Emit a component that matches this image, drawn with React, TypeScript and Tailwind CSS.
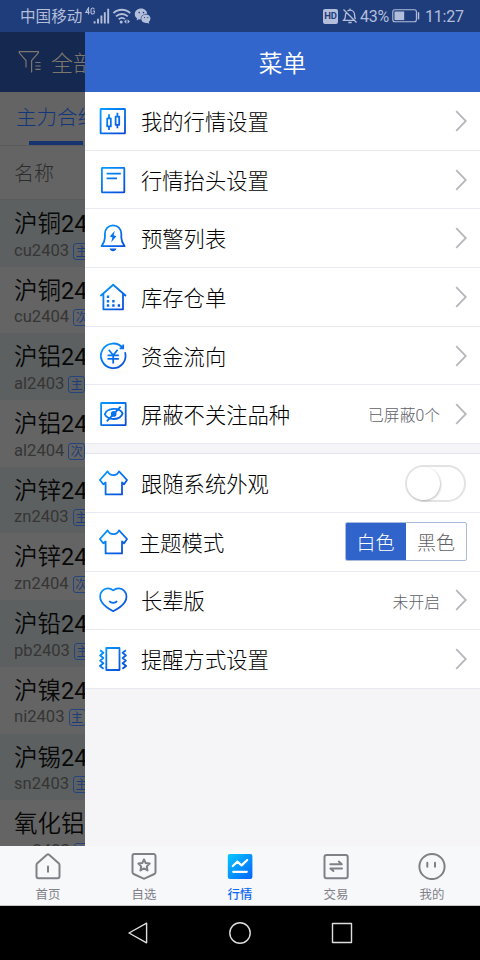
import React, { useState } from "react";

interface MenuItem {
  title: string;
  icon: React.ReactNode;
  extra?: "chevron" | "toggle" | "theme";
  note?: string;
}

interface Contract {
  metal: string;
  month: string;
  code: string;
  tag: string;
}

const contracts: Contract[] = [
  { metal: "沪铜", month: "2403", code: "cu2403", tag: "主" },
  { metal: "沪铜", month: "2404", code: "cu2404", tag: "次" },
  { metal: "沪铝", month: "2403", code: "al2403", tag: "主" },
  { metal: "沪铝", month: "2404", code: "al2404", tag: "次" },
  { metal: "沪锌", month: "2403", code: "zn2403", tag: "主" },
  { metal: "沪锌", month: "2404", code: "zn2404", tag: "次" },
  { metal: "沪铅", month: "2403", code: "pb2403", tag: "主" },
  { metal: "沪镍", month: "2403", code: "ni2403", tag: "主" },
  { metal: "沪锡", month: "2403", code: "sn2403", tag: "主" },
  { metal: "氧化铝", month: "2403", code: "ao2403", tag: "主" },
];

const MenuIcon: React.FC<{ children: React.ReactNode }> = ({ children }) => (
  <svg
    viewBox="0 0 30 30"
    className="w-[30px] h-[30px] shrink-0"
    fill="none"
    stroke="url(#menuBlue)"
    strokeWidth="1.8"
    strokeLinejoin="round"
  >
    {children}
  </svg>
);

const shirt = (
  <path d="M9.6 3.4 1.9 12 5.3 16.3 7.6 14.5V26.4H24V14.5L26.1 16.3 29 12 21 3.4C18.8 8.4 12 8.4 9.6 3.4Z" />
);

const quoteItems: MenuItem[] = [
  {
    title: "我的行情设置",
    extra: "chevron",
    icon: (
      <>
        <rect x="2.6" y="3" width="24.4" height="24.4" rx="0.5" />
        <path d="M9.2 12.4h3.6v8H9.2zM11 8.2v4.2M11 20.4v3.6M17.6 10.6h3.6v8.2h-3.6zM19.4 6.8v3.8M19.4 18.8v3.4" />
      </>
    ),
  },
  {
    title: "行情抬头设置",
    extra: "chevron",
    icon: (
      <>
        <rect x="3.9" y="2.8" width="22.4" height="24.6" rx="0.5" />
        <path d="M8.6 8.7h14.2M8.6 13.4H19" />
      </>
    ),
  },
  {
    title: "预警列表",
    extra: "chevron",
    icon: (
      <>
        <path d="M3.6 23.2C5.3 20.6 6.9 18.4 6.9 14.6V11C6.9 5.6 10.6 2.4 15.1 2.4S23.3 5.6 23.3 11v3.6c0 3.8 1.6 6 3.3 8.6Z" />
        <path d="M16.8 7.7 11.8 13.6l2.6 1-1.2 4.6 5.2-6-2.7-1Z" fill="url(#menuBlue)" stroke="none" />
        <path d="M11.5 25.6h7c-.6 1.7-2 2.7-3.5 2.7s-2.9-1-3.5-2.7Z" fill="url(#menuBlue)" stroke="none" />
      </>
    ),
  },
  {
    title: "库存仓单",
    extra: "chevron",
    icon: (
      <>
        <path d="M2.4 14 15.2 2.8 28 14M5.4 11.5V27.3H25V11.5" />
        <path d="M8.8 13.6h2.4V16H8.8zM8.8 18h2.4v2.4H8.8zM8.8 22.3h2.4v2.4H8.8zM14.2 18h2.4v2.4h-2.4zM14.2 22.3h2.4v2.4h-2.4zM19.7 22.3h2.4v2.4h-2.4z" fill="url(#menuBlue)" stroke="none" />
      </>
    ),
  },
  {
    title: "资金流向",
    extra: "chevron",
    icon: (
      <>
        <path d="M24.9 7.2A12.3 12.3 0 1 0 27 11.2M25.2 3.4V7.4H21.6" />
        <path d="m10.8 8.8 4.4 5.4 4.4-5.4M9.5 14.3h11.4M9.5 17.9h11.4M15.2 14.2v8.3" />
      </>
    ),
  },
  {
    title: "屏蔽不关注品种",
    extra: "chevron",
    note: "已屏蔽0个",
    icon: (
      <>
        <rect x="3.1" y="4" width="24.6" height="22.2" rx="0.5" />
        <path d="M6.8 15.4C9.2 8.2 21.6 8.2 24.6 14.4 22.2 21.8 10.2 21.6 6.8 15.4Z" />
        <path d="M22.6 7.6 8.8 22.4" />
        <circle cx="15.7" cy="14.9" r="1.9" fill="url(#menuBlue)" />
      </>
    ),
  },
];

const appearanceItems: MenuItem[] = [
  { title: "跟随系统外观", extra: "toggle", icon: shirt },
  { title: "主题模式", extra: "theme", icon: shirt },
  {
    title: "长辈版",
    extra: "chevron",
    note: "未开启",
    icon: (
      <>
        <path d="M15.2 5.4C11.8 2.6 7.3 2.9 4.5 5.7 1.5 8.8 1.4 13.8 3.9 17.3c2.6 3.8 6.3 6.5 11.3 8.9 5-2.4 8.9-5.1 11.5-8.9 2.5-3.5 2.4-8.5-.6-11.6-2.8-2.8-7.4-3.1-10.9-.3Z" />
        <path d="M11.2 16.2c1.9 2.2 6 2.2 7.9 0" />
      </>
    ),
  },
  {
    title: "提醒方式设置",
    extra: "chevron",
    icon: (
      <>
        <rect x="8.3" y="4" width="13.2" height="22" rx="0.3" />
        <path d="M2.1 6.2 5.4 8.8 2.1 11.5 5.4 14 2.1 16.6 5.4 19.2 1.9 22 5.6 24.7M27.9 6.2 24.6 8.8 27.9 11.5 24.6 14 27.9 16.6 24.6 19.2 28.1 22 24.4 24.7" />
      </>
    ),
  },
];

const StatusBar: React.FC = () => (
  <header className="flex h-8 shrink-0 items-center bg-[#1f3d7a] pl-[20px] pr-[16px] text-[#b3bedb]">
    <span className="pt-[3px] text-[15.6px] leading-[29px]">中国移动</span>
    <svg viewBox="0 0 68 18" className="ml-[3px] h-[18px] w-[68px]" fill="none" stroke="currentColor">
      <path d="M3.5 7.5V.8L.8 5.4h3.8M9.3 2.4C8.9.4 6.1.4 6 2.8v2.4c0 2.5 3.3 2.4 3.4 0V4H7.8" strokeWidth="1.1" />
      <path d="M9.6 14.2v2.2M13 11.8v4.6M16.4 8.5v7.9M19.8 5.2v11.2M23.2 1.7v14.7" strokeWidth="1.9" />
      <path d="M28.4 6.1c4.6-4.5 12.2-4.5 16.8 0M31 9.3c3.4-3.1 8.4-3.1 11.8 0M33.7 12.3c1.9-1.6 4.5-1.6 6.2-.1" strokeWidth="1.8" />
      <circle cx="36.2" cy="14.9" r="1.5" fill="currentColor" stroke="none" />
      <path d="m41.4 12.2-2.3 2.3 2.3 2.3zM42.6 12.2l2.3 2.3-2.3 2.3z" fill="currentColor" stroke="none" />
      <path d="M56.4 1.6c-4.2 0-6.6 2.7-6.6 5.6 0 1.8.8 3.2 2.3 4.2l-.5 2.1 2.2-1.3 2 .4c-.5-3.6 2.4-5.9 6.4-5.9-.4-2.8-2.8-5.1-5.8-5.1Z" fill="currentColor" stroke="none" />
      <path d="M61 7.6c-3.1 0-4.8 2.1-4.8 4.2 0 2.5 2.2 4.7 6.1 4.1l1.9.9-.5-1.7c3.2-2.3 1.9-7.5-2.7-7.5Z" fill="currentColor" stroke="none" />
      <g fill="#1f3d7a" stroke="none">
        <circle cx="54.2" cy="5.6" r=".8" />
        <circle cx="58.5" cy="5.6" r=".8" />
        <circle cx="59.5" cy="10.6" r=".6" />
        <circle cx="62.8" cy="10.6" r=".6" />
      </g>
    </svg>
    <div className="ml-auto flex items-center">
      <span className="flex h-[15px] w-[15px] items-center justify-center rounded-[2px] bg-[#b3bedb] font-[Roboto] text-[9.5px] font-bold leading-none tracking-[-0.2px] text-[#1f3d7a]">
        HD
      </span>
      <svg viewBox="0 0 16 16" className="ml-1 h-4 w-4" fill="none" stroke="currentColor" strokeWidth="1.3">
        <path d="m1.5 1.5 13 13M4.2 4.7c-.6 1-.8 2-.8 3.2 0 2-.5 3.2-1.7 4.4h10.6M5.5 3.1C6.3 2.5 7 2.2 8 2.2c2.8 0 4.6 2.2 4.6 5 0 1.9.2 3 .9 4M6.3 14.5h3.4M8 .6v1.6" />
      </svg>
      <span className="ml-[2px] w-[30px] pt-[2px] text-[16px] leading-[30px] tracking-[-0.3px]">43%</span>
      <svg viewBox="0 0 28 14" className="ml-[2px] h-[14px] w-7" fill="none" stroke="currentColor">
        <rect x=".8" y=".8" width="23.6" height="12" rx="2" strokeWidth="1.1" />
        <path d="M2.5 2.5h9.7v8.6H2.5z" fill="currentColor" stroke="none" />
        <path d="M26.5 3.2v7.2" strokeWidth="1.5" />
      </svg>
      <span className="ml-[5px] w-[39px] pt-[2px] text-[16px] leading-[30px] tracking-[-0.2px]">11:27</span>
    </div>
  </header>
);

const QuoteList: React.FC = () => (
  <aside className="w-[85px] shrink-0 overflow-hidden whitespace-nowrap bg-[#646464]">
    <div className="flex h-[60px] items-center bg-[#142850] text-[#7d776d]">
      <svg viewBox="0 0 24 24" className="ml-[18px] h-6 w-6 shrink-0" fill="none" stroke="currentColor" strokeWidth="1.2">
        <path d="M8 17.5v-7L1.2 2.8V1.7h19.2v1.1L13.6 10.5v12M17.3 12.5h5.3M17.3 16h5.3M17.3 19.4h5.3" />
      </svg>
      <span className="ml-[9px] pt-[3px] text-[22px] font-light">全部</span>
    </div>
    <div className="h-[54px] border-b border-[#5b5b5d] pl-[16px]">
      <p className="h-[49px] text-[20.5px] font-light leading-[53px] text-[#12367c]">主力合约</p>
      <div className="ml-[13px] h-1 w-[54px] bg-[#173471]" />
    </div>
    <div className="h-[54px] border-b border-[#5b5b5d] pl-[14px] text-[20px] font-light leading-[57px] text-[#2c2c2c]">
      名称
    </div>
    {contracts.map((item, i) => (
      <div key={item.code} className={`h-[66.7px] pl-[14px] pt-[9px] ${i % 2 === 0 ? "bg-[#5d6060]" : ""}`}>
        <p className="text-[23.5px] leading-[30px] text-[#080808]">
          <span className="font-[350]">{item.metal}</span>
          {item.month}
        </p>
        <div className="flex h-[24px] items-center text-[16.6px] text-[#353535]">
          {item.code}
          <span className="ml-[4px] flex h-[17px] w-[17px] shrink-0 items-center justify-center rounded-[3px] border border-[#23447f] pt-[1px] text-[12px] leading-none text-[#1c3c78]">
            {item.tag}
          </span>
        </div>
      </div>
    ))}
  </aside>
);

const MenuRow: React.FC<{ item: MenuItem }> = ({ item }) => {
  const [on, setOn] = useState(false);

  return (
    <div className="flex flex-1 items-center border-b-[1.5px] border-[#e7e8f0] bg-white pl-[13px] pr-[13px]">
      <MenuIcon>{item.icon}</MenuIcon>
      <span className={`pt-[4px] text-[21.3px] font-light leading-8 text-black ${item.extra === "theme" ? "ml-[11px]" : "ml-[13px]"}`}>
        {item.title}
      </span>
      <div className="ml-auto flex items-center">
        {item.note && <span className="mr-[15px] pt-[4px] text-[15.8px] font-light text-[#606068]">{item.note}</span>}
        {item.extra === "chevron" && (
          <svg viewBox="0 0 12 22" className="h-[22px] w-3" fill="none" stroke="#b6b6bc" strokeWidth="1.8">
            <path d="m1.2 1.2 9.6 9.8-9.6 9.8" />
          </svg>
        )}
        {item.extra === "toggle" && (
          <button
            onClick={() => setOn(!on)}
            className={`mr-[1px] mt-[1px] flex h-[37px] w-[61px] rounded-full border-2 border-[#e3e3e4] bg-white ${on ? "justify-end" : ""}`}
          >
            <span className="h-[33px] w-[33px] rounded-full bg-white shadow-[1px_1px_2px_rgba(0,0,0,0.22)]" />
          </button>
        )}
        {item.extra === "theme" && (
          <div className="flex h-[39px] w-[122px] overflow-hidden rounded-[2px] border border-[#a9bddb] text-[19px] font-light leading-[37px]">
            <span className="-my-px -ml-px flex w-[61px] items-center justify-center bg-[#3064cb] pt-[4px] text-white">白色</span>
            <span className="flex-1 pt-[2px] text-center text-[#606064]">黑色</span>
          </div>
        )}
      </div>
    </div>
  );
};

const tabs = [
  {
    label: "首页",
    icon: <path d="M3.3 11.2 13.2 2.6a1.3 1.3 0 0 1 1.6 0l9.9 8.6c.5.5.8 1 .8 1.7v11.4a2 2 0 0 1-2 2h-19a2 2 0 0 1-2-2V12.9c0-.7.3-1.2.8-1.7ZM14 14.5v5.2" />,
  },
  {
    label: "自选",
    icon: (
      <>
        <path d="M4.3 2.1h19.4a1.8 1.8 0 0 1 1.8 1.8v16.4c0 .8-.4 1.4-1.1 1.7L14.9 26.4c-.6.3-1.2.3-1.8 0L3.6 22c-.7-.3-1.1-.9-1.1-1.7V3.9a1.8 1.8 0 0 1 1.8-1.8Z" />
        <path d="m14 7.4 1.7 3.7 4 .5-2.9 2.8.7 4-3.5-2-3.5 2 .7-4-2.9-2.8 4-.5Z" />
      </>
    ),
  },
  {
    label: "行情",
    icon: (
      <>
        <rect x="1.8" y="2" width="24.6" height="25" rx="2" fill="url(#tabBlue)" stroke="none" />
        <path d="m6.8 14 4.6-4.4 4.2 3.8 5.6-5.4M7.2 19.8h13.6" stroke="#fff" strokeWidth="2.2" />
      </>
    ),
  },
  {
    label: "交易",
    icon: (
      <>
        <rect x="2.5" y="2.9" width="23.2" height="23.4" rx="2" />
        <path d="M8.3 12.2h11.5l-3-2.6M20 16.5H8.4l3 2.6" />
      </>
    ),
  },
  {
    label: "我的",
    icon: (
      <>
        <circle cx="14" cy="14.5" r="12.6" />
        <path d="M9.3 10.7v4M17 10.7v4" />
      </>
    ),
  },
];

export default function App() {
  return (
    <div className="flex h-[960px] w-[480px] flex-col overflow-hidden bg-black font-[Roboto,'Noto_Sans_CJK_SC',sans-serif]">
      <svg className="absolute h-0 w-0">
        <defs>
          <linearGradient id="menuBlue" gradientUnits="userSpaceOnUse" x1="3" y1="3" x2="26" y2="28">
            <stop offset="0" stopColor="#079bff" />
            <stop offset="1" stopColor="#0848d8" />
          </linearGradient>
          <linearGradient id="tabBlue" x1="0" y1="0" x2="1" y2="1">
            <stop offset="0" stopColor="#05c8ff" />
            <stop offset="1" stopColor="#0563ff" />
          </linearGradient>
        </defs>
      </svg>

      <StatusBar />

      <div className="flex h-[814px] shrink-0 overflow-hidden">
        <QuoteList />
        <main className="flex flex-1 flex-col bg-[#f5f5f8]">
          <h1 className="h-[60px] shrink-0 bg-[#3266cd] text-center text-[23.7px] font-[350] leading-[65px] text-white">
            菜单
          </h1>
          <section className="flex h-[352px] flex-col">
            {quoteItems.map((item) => (
              <MenuRow key={item.title} item={item} />
            ))}
          </section>
          <section className="mt-[9px] flex h-[236px] flex-col border-t border-[#e3e5ee]">
            {appearanceItems.map((item) => (
              <MenuRow key={item.title} item={item} />
            ))}
          </section>
        </main>
      </div>

      <nav className="flex h-[60px] shrink-0 border-b border-[#c4c4c4] bg-[#f7f8fa]">
        {tabs.map((tab, i) => (
          <div
            key={tab.label}
            className={`flex flex-1 flex-col items-center pt-[6px] text-[12.4px] ${i === 2 ? "font-medium text-[#0d68f5]" : "text-[#808087]"}`}
          >
            <svg viewBox="0 0 28 28" className="h-7 w-7" fill="none" stroke="currentColor" strokeWidth="2" strokeLinejoin="round" strokeLinecap="round">
              {tab.icon}
            </svg>
            <span className="mt-[6px] leading-[18px]">{tab.label}</span>
          </div>
        ))}
      </nav>

      <footer className="flex flex-1 items-center justify-center gap-[78px] bg-black">
        {[
          <path key="back" d="M20.6 2.2v19.6L3 12Z" />,
          <circle key="home" cx="12" cy="12" r="10.2" />,
          <rect key="recent" x="2.5" y="2.5" width="19" height="19" />,
        ].map((shape, i) => (
          <svg key={i} viewBox="0 0 24 24" className="h-6 w-6" fill="none" stroke="#dedede" strokeWidth="1.4" strokeLinejoin="round">
            {shape}
          </svg>
        ))}
      </footer>
    </div>
  );
}
